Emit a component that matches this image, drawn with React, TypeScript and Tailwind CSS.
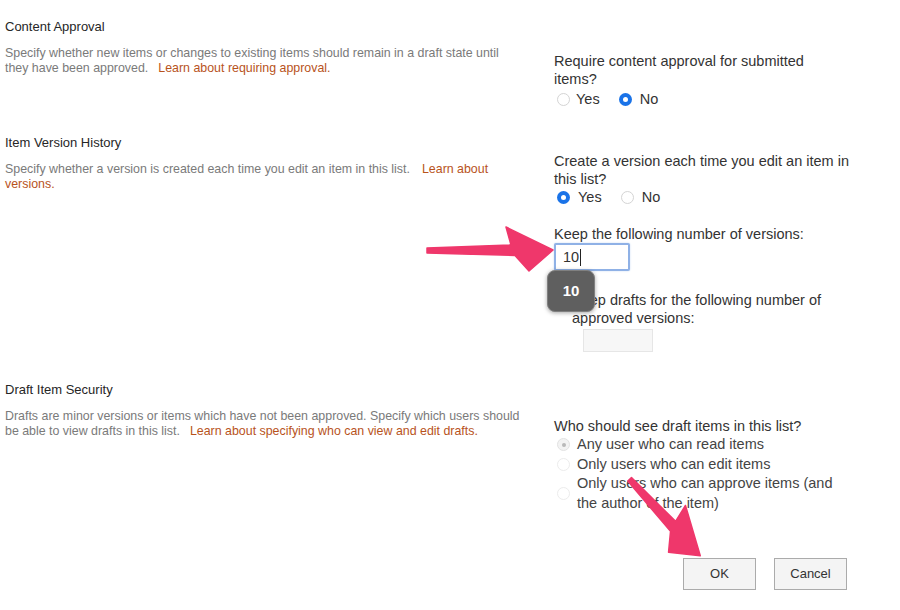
import React from "react";

const font = { fontFamily: '"Liberation Sans", Arial, sans-serif' };

function Radio({ checked = false, disabled = false }: { checked?: boolean; disabled?: boolean }) {
    if (checked && !disabled) {
        return (
            <span className="inline-flex h-[13px] w-[13px] items-center justify-center rounded-full bg-[#1a73e8]">
                <span className="h-[5px] w-[5px] rounded-full bg-white" />
            </span>
        );
    }
    if (checked && disabled) {
        return (
            <span className="inline-flex h-[13px] w-[13px] items-center justify-center rounded-full border border-[#e2e2e2] bg-[#f3f3f3]">
                <span className="h-[4px] w-[4px] rounded-full bg-[#b9b9b9]" />
            </span>
        );
    }
    return (
        <span
            className={
                disabled
                    ? "inline-block h-[13px] w-[13px] rounded-full border border-[#ececec] bg-white"
                    : "inline-block h-[13px] w-[13px] rounded-full border border-[#d4d4d4] bg-white"
            }
        />
    );
}

function Section({
    title,
    children,
}: {
    title: string;
    children: React.ReactNode;
}) {
    return (
        <div>
            <h2 className="text-[13px] leading-[16px] text-[#262626]">{title}</h2>
            <p className="mt-[11px] text-[12.4px] leading-[15px] whitespace-nowrap text-[#7a7a7a]">{children}</p>
        </div>
    );
}

function Arrow({ x, y, angle, length }: { x: number; y: number; angle: number; length: number }) {
    const L = length;
    const d = `M0 -2 L${L - 42} -5 L${L - 47} -23 L${L} 0 L${L - 24} 21 L${L - 38} 5.5 L0 3 Z`;
    return (
        <g transform={`translate(${x} ${y}) rotate(${angle})`}>
            <path d={d} fill="#ef376b" strokeLinejoin="round" stroke="#ef376b" strokeWidth="1.5" />
        </g>
    );
}

export default function App() {
    return (
        <div className="relative h-[610px] w-[900px] overflow-hidden bg-white" style={font}>
            <div className="pt-[19px]">
                {/* Content Approval */}
                <div className="flex">
                    <div className="w-[554px] shrink-0 pl-[5px]">
                        <Section title="Content Approval">
                            Specify whether new items or changes to existing items should remain in a draft state until
                            <br />
                            they have been approved.
                            <a className="ml-[10px] text-[#b8531c]">Learn about requiring approval.</a>
                        </Section>
                    </div>
                    <div className="pt-[33px] text-[14.5px] leading-[18px] text-[#333]">
                        <p>
                            Require content approval for submitted
                            <br />
                            items?
                        </p>
                        <div className="flex items-center pt-[2px]">
                            <label className="flex items-center gap-[6px] pl-[3px]">
                                <Radio />
                                <span>Yes</span>
                            </label>
                            <label className="ml-[19px] flex items-center gap-[8px]">
                                <Radio checked />
                                <span>No</span>
                            </label>
                        </div>
                    </div>
                </div>

                {/* Item Version History */}
                <div className="mt-[27px] flex">
                    <div className="w-[554px] shrink-0 pl-[5px]">
                        <Section title="Item Version History">
                            Specify whether a version is created each time you edit an item in this list.
                            <a className="ml-[12px] text-[#b8531c]">Learn about</a>
                            <br />
                            <a className="text-[#b8531c]">versions.</a>
                        </Section>
                    </div>
                    <div className="pt-[17px] text-[14.5px] leading-[18px] text-[#333]">
                        <p>
                            Create a version each time you edit an item in
                            <br />
                            this list?
                        </p>
                        <div className="flex items-center">
                            <label className="flex items-center gap-[8px] pl-[3px]">
                                <Radio checked />
                                <span>Yes</span>
                            </label>
                            <label className="ml-[19px] flex items-center gap-[8px]">
                                <Radio />
                                <span>No</span>
                            </label>
                        </div>
                        <p className="mt-[19px]">Keep the following number of versions:</p>
                        <div className="relative">
                            <div className="flex h-[28px] w-[76px] items-center rounded-[2px] border-2 border-[#8fb1e6] bg-white pl-[7px] shadow-[0_0_2px_#c4d7f3]">
                                <span>10</span>
                                <span className="ml-[1px] h-[17px] w-[1px] bg-[#222]" />
                            </div>
                            <div className="absolute top-[27px] left-[-7px] flex h-[42px] w-[48px] items-center justify-center rounded-[8px] border border-[#808080] bg-[#5f5f5f] text-[15px] font-semibold text-white shadow-[0_1px_4px_rgba(0,0,0,0.35)]">
                                10
                            </div>
                        </div>
                        <p className="mt-[20px] pl-[18px]">
                            Keep drafts for the following number of
                            <br />
                            approved versions:
                        </p>
                        <div className="mt-[2px] ml-[29px] h-[23px] w-[70px] border border-[#e6e6e6] bg-[#f7f7f7]" />
                    </div>
                </div>

                {/* Draft Item Security */}
                <div className="mt-[30px] flex">
                    <div className="w-[554px] shrink-0 pl-[5px]">
                        <Section title="Draft Item Security">
                            Drafts are minor versions or items which have not been approved. Specify which users should
                            <br />
                            be able to view drafts in this list.
                            <a className="ml-[10px] text-[#b8531c]">Learn about specifying who can view and edit drafts.</a>
                        </Section>
                    </div>
                    <div className="pt-[35px] text-[14.5px] leading-[18px] text-[#333]">
                        <p>Who should see draft items in this list?</p>
                        <div className="leading-[19.5px] text-[#444]">
                            <label className="flex items-center gap-[7px] pl-[3px]">
                                <Radio checked disabled />
                                <span>Any user who can read items</span>
                            </label>
                            <label className="flex items-center gap-[7px] pl-[3px]">
                                <Radio disabled />
                                <span>Only users who can edit items</span>
                            </label>
                            <label className="flex items-center gap-[7px] pl-[3px]">
                                <Radio disabled />
                                <span>
                                    Only users who can approve items (and
                                    <br />
                                    the author of the item)
                                </span>
                            </label>
                        </div>
                    </div>
                </div>

                {/* Buttons */}
                <div className="mt-[45px] flex justify-end gap-[18px] pr-[53px]">
                    <button className="h-[32px] w-[73px] border border-[#ababab] bg-[#f4f4f4] text-[13px] text-[#333]">OK</button>
                    <button className="h-[32px] w-[73px] border border-[#ababab] bg-[#f4f4f4] text-[13px] text-[#333]">Cancel</button>
                </div>
            </div>

            {/* Annotation arrows */}
            <svg className="pointer-events-none absolute inset-0" width="900" height="610" viewBox="0 0 900 610">
                <Arrow x={427} y={250} angle={0} length={126} />
                <Arrow x={630} y={479} angle={47.5} length={104} />
            </svg>
        </div>
    );
}
